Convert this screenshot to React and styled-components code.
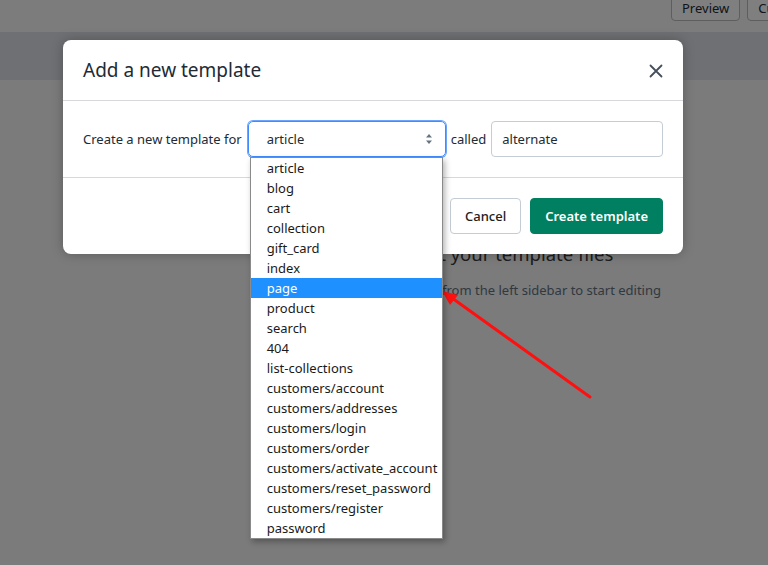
import React from "react"
import styled, { createGlobalStyle } from "styled-components"

const templates = [
  "article",
  "blog",
  "cart",
  "collection",
  "gift_card",
  "index",
  "page",
  "product",
  "search",
  "404",
  "list-collections",
  "customers/account",
  "customers/addresses",
  "customers/login",
  "customers/order",
  "customers/activate_account",
  "customers/reset_password",
  "customers/register",
  "password",
]

const GlobalStyle = createGlobalStyle`
  html, body {
    margin: 0;
    padding: 0;
    overflow: hidden;
  }
  body {
    font-family: "Noto Sans", "Open Sans", sans-serif;
    color: #212b36;
  }
`

export default function App() {
  return (
    <Screen>
      <GlobalStyle />
      <Page>
        <TopBar>
          <BarButton>Preview</BarButton>
          <BarButton>Customize</BarButton>
        </TopBar>
        <Band />
        <Main>
          <Sidebar />
          <Empty>
            <EmptyTitle>Edit your template files</EmptyTitle>
            <EmptyText>Select a file from the left sidebar to start editing</EmptyText>
          </Empty>
        </Main>
      </Page>

      <Overlay>
        <Modal>
          <Header>
            <Title>Add a new template</Title>
            <Close aria-label="Close">
              <svg width="14" height="14" viewBox="0 0 14 14">
                <path d="M1.5 1.5l11 11M12.5 1.5l-11 11" stroke="#454f5b" strokeWidth="1.8" strokeLinecap="round" />
              </svg>
            </Close>
          </Header>
          <Body>
            <Label>Create a new template for</Label>
            <SelectWrap>
              <Select>
                <span>article</span>
                <svg width="8" height="12" viewBox="0 0 8 12">
                  <path d="M4 1L7 4.5H1z M4 11L1 7.5h6z" fill="#637381" />
                </svg>
              </Select>
              <Options>
                {templates.map(t => (
                  <Option key={t} active={t === "page"}>
                    {t}
                  </Option>
                ))}
              </Options>
            </SelectWrap>
            <Label>called</Label>
            <Input defaultValue="alternate" />
          </Body>
          <Footer>
            <Button>Cancel</Button>
            <Button primary>Create template</Button>
          </Footer>
        </Modal>
      </Overlay>

      <Annotation width="768" height="565" viewBox="0 0 768 565">
        <line x1="590" y1="397" x2="452" y2="298" stroke="#ff1010" strokeWidth="3" strokeLinecap="round" />
        <path d="M442 291 L458 295 L450 305 Z" fill="#ff1010" />
      </Annotation>
    </Screen>
  )
}

const Screen = styled.div`
  position: relative;
  width: 768px;
  height: 565px;
  overflow: hidden;
`

const Page = styled.div`
  display: flex;
  flex-direction: column;
  height: 100%;
  background: #f6f6f6;
`

const TopBar = styled.div`
  display: flex;
  justify-content: flex-start;
  align-items: flex-start;
  gap: 7px;
  height: 32px;
  padding-left: 671px;
  background: #f9f9f9;
  overflow: hidden;
  flex-shrink: 0;
`

const BarButton = styled.div`
  flex-shrink: 0;
  height: 24px;
  margin-top: -5px;
  padding: 0 10px;
  display: flex;
  align-items: center;
  border: 1px solid #b8bcc0;
  border-radius: 4px;
  background: #ffffff;
  font-size: 13px;
  color: #212b36;
`

const Band = styled.div`
  height: 48px;
  background: #dee0e6;
  flex-shrink: 0;
`

const Main = styled.div`
  display: flex;
  flex: 1;
`

const Sidebar = styled.div`
  width: 258px;
  flex-shrink: 0;
`

const Empty = styled.div`
  flex: 1;
  text-align: center;
  padding-top: 162px;
`

const EmptyTitle = styled.div`
  font-size: 18.5px;
  line-height: 24px;
  color: #3a3a3a;
`

const EmptyText = styled.div`
  margin-top: 15px;
  padding-left: 5px;
  font-size: 13px;
  line-height: 18px;
  color: #637381;
`

const Overlay = styled.div`
  position: absolute;
  inset: 0;
  background: rgba(0, 0, 0, 0.5);
  padding: 40px 0 0 63px;
`

const Modal = styled.div`
  width: 620px;
  background: #ffffff;
  border-radius: 8px;
  box-shadow: 0 0 12px rgba(0, 0, 0, 0.25);
`

const Header = styled.div`
  display: flex;
  align-items: center;
  justify-content: space-between;
  height: 60px;
  padding: 0 20px;
  border-bottom: 1px solid #d6d8db;
`

const Title = styled.h2`
  margin: 0;
  font-size: 19px;
  font-weight: 400;
  color: #212b36;
`

const Close = styled.div`
  display: flex;
  padding-top: 2px;
`

const Body = styled.div`
  display: flex;
  align-items: center;
  gap: 5px;
  padding: 20px;
  border-bottom: 1px solid #d6d8db;
`

const Label = styled.span`
  flex-shrink: 0;
  white-space: nowrap;
  font-size: 13px;
  color: #212b36;
`

const SelectWrap = styled.div`
  position: relative;
  flex-shrink: 0;
  margin-left: 1px;
`

const Select = styled.div`
  box-sizing: border-box;
  width: 198px;
  height: 36px;
  display: flex;
  align-items: center;
  justify-content: space-between;
  padding: 0 12px 0 18px;
  border: 1px solid #3f8cff;
  box-shadow: 0 0 0 1px #6aa6ff;
  border-radius: 5px;
  font-size: 13px;
  color: #212b36;
`

const Options = styled.div`
  position: absolute;
  top: 36px;
  left: 2px;
  width: 193px;
  box-sizing: border-box;
  background: #ffffff;
  border: 1px solid #8a8a8a;
  box-shadow: 2px 3px 6px rgba(0, 0, 0, 0.3);
  z-index: 2;
`

const Option = styled.div`
  height: 20px;
  line-height: 20px;
  padding-left: 16px;
  font-size: 13px;
  white-space: nowrap;
  color: ${p => (p.active ? "#ffffff" : "#1a1a1a")};
  background: ${p => (p.active ? "#1e90ff" : "transparent")};
`

const Input = styled.input`
  flex: 1;
  min-width: 0;
  box-sizing: border-box;
  height: 36px;
  padding: 0 10px;
  border: 1px solid #c4cdd5;
  border-radius: 4px;
  font-family: inherit;
  font-size: 13px;
  color: #212b36;
  outline: none;
`

const Footer = styled.div`
  display: flex;
  justify-content: flex-end;
  gap: 9px;
  padding: 20px;
`

const Button = styled.div`
  box-sizing: border-box;
  height: 36px;
  display: flex;
  align-items: center;
  padding: 0 14px;
  border-radius: 4px;
  font-size: 13px;
  font-weight: ${p => (p.primary ? 600 : 500)};
  color: ${p => (p.primary ? "#ffffff" : "#202223")};
  background: ${p => (p.primary ? "#008060" : "#ffffff")};
  border: 1px solid ${p => (p.primary ? "#008060" : "#c4cdd5")};
`

const Annotation = styled.svg`
  position: absolute;
  inset: 0;
  pointer-events: none;
`
